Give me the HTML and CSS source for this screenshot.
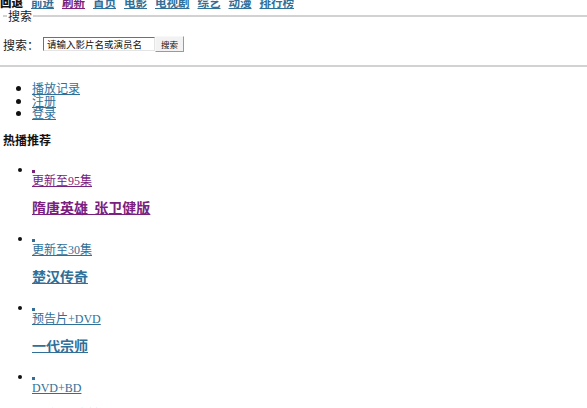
FILE: index.html
```html
<!DOCTYPE html>
<html lang="zh-CN">
<head>
<meta charset="utf-8">
<title>影视</title>
<link rel="stylesheet" href="styles.css">
</head>
<body>
<div class="nav">
  <b class="nav-item">回退</b>
  <a class="nav-item link" href="#">前进</a>
  <a class="nav-item link visited" href="#">刷新</a>
  <a class="nav-item link" href="#">首页</a>
  <a class="nav-item link" href="#">电影</a>
  <a class="nav-item link" href="#">电视剧</a>
  <a class="nav-item link" href="#">综艺</a>
  <a class="nav-item link" href="#">动漫</a>
  <a class="nav-item link" href="#">排行榜</a>
</div>
<fieldset class="search">
  <legend class="search-legend">搜索</legend>
  <div class="search-row">
    <span class="search-label">搜索：</span>
    <span class="search-box">请输入影片名或演员名</span>
    <span class="search-btn">搜索</span>
  </div>
</fieldset>
<div class="rule"></div>
<ul class="menu">
  <li><a class="link" href="#">播放记录</a></li>
  <li><a class="link" href="#">注册</a></li>
  <li><a class="link" href="#">登录</a></li>
</ul>
<div class="hot">热播推荐</div>
<ul class="films">
  <li class="film visited">
    <a class="link thumb" href="#"><span class="sq"></span></a>
    <a class="link note" href="#">更新至95集</a>
    <p class="title"><a class="link" href="#">隋唐英雄&nbsp;&nbsp;张卫健版</a></p>
  </li>
  <li class="film">
    <a class="link thumb" href="#"><span class="sq"></span></a>
    <a class="link note" href="#">更新至30集</a>
    <p class="title"><a class="link" href="#">楚汉传奇</a></p>
  </li>
  <li class="film">
    <a class="link thumb" href="#"><span class="sq"></span></a>
    <a class="link note" href="#">预告片+DVD</a>
    <p class="title"><a class="link" href="#">一代宗师</a></p>
  </li>
  <li class="film">
    <a class="link thumb" href="#"><span class="sq"></span></a>
    <a class="link note" href="#">DVD+BD</a>
    <p class="title"><a class="link" href="#">西游降魔篇</a></p>
  </li>
</ul>
</body>
</html>
```

FILE: styles.css
```css
html, body {
  margin: 0;
  padding: 0;
  background: #ffffff;
}
body {
  font-family: "Liberation Serif", "Noto Sans CJK SC", serif;
  font-size: 12px;
  color: #111111;
  overflow: hidden;
}
.link {
  color: #2f6f98;
  text-decoration: underline;
}
.visited .link,
.link.visited {
  color: #7a2180;
}

/* top nav */
.nav {
  display: flex;
  gap: 8px;
  margin: -5px 0 0 0;
  height: 14px;
  line-height: 14px;
  font-size: 11.5px;
  font-weight: bold;
  font-family: "Noto Sans CJK SC", sans-serif;
}
.nav-item {
  color: #111111;
}
.nav-item.link {
  color: #2f6f98;
}
.nav-item.link.visited {
  color: #7a2180;
}

/* search */
.search {
  margin: 0 0 0 3px;
  padding: 0;
  border: none;
  border-top: 2px solid #d2d2d2;
  min-width: 0;
}
.search-legend {
  margin-left: 4px;
  padding: 0 1px;
  font-size: 12px;
  line-height: 14px;
  font-family: "Noto Sans CJK SC", sans-serif;
  color: #222222;
}
.search-row {
  display: flex;
  align-items: center;
  height: 16px;
  margin-top: 13px;
  padding-bottom: 13px;
}
.search-label {
  width: 40px;
  font-size: 12px;
  font-family: "Noto Sans CJK SC", sans-serif;
  color: #222222;
}
.search-box {
  box-sizing: border-box;
  width: 112px;
  height: 14px;
  line-height: 12px;
  padding-left: 3px;
  font-size: 9.5px;
  font-family: "Noto Sans CJK SC", sans-serif;
  color: #111111;
  background: #ffffff;
  border: 1px solid;
  border-color: #707070 #e4e4e4 #e4e4e4 #707070;
}
.search-btn {
  box-sizing: border-box;
  width: 29px;
  height: 16px;
  line-height: 14px;
  text-align: center;
  font-size: 8.5px;
  font-family: "Noto Sans CJK SC", sans-serif;
  color: #111111;
  background: #f2f2f2;
  border: 1px solid;
  border-color: #f8f8f8 #9a9a9a #9a9a9a #f8f8f8;
}
.rule {
  height: 2px;
  background: #d2d2d2;
}

/* menu */
.menu {
  margin: 15px 0 0 0;
  padding: 0 0 0 32px;
  line-height: 12.5px;
  font-family: "Noto Sans CJK SC", sans-serif;
  font-size: 12px;
}
.hot {
  margin: 13px 0 0 3px;
  line-height: 14px;
  font-size: 12px;
  font-weight: bold;
  font-family: "Noto Sans CJK SC", sans-serif;
}

/* films */
.films {
  margin: 16px 0 0 0;
  padding: 0 0 0 32px;
  font-family: "Liberation Serif", "Noto Sans CJK SC", serif;
  font-size: 12px;
}
.film {
  line-height: 12px;
  margin-bottom: 17px;
}
.thumb {
  display: block;
  height: 12px;
}
.sq {
  display: inline-block;
  width: 3px;
  height: 3px;
  background: currentColor;
  vertical-align: baseline;
}
.note {
  display: block;
  width: max-content;
  height: 12px;
}
.title {
  margin: 12px 0 0 0;
  line-height: 16px;
  font-size: 14px;
  font-weight: bold;
  font-family: "Noto Sans CJK SC", sans-serif;
}
```
